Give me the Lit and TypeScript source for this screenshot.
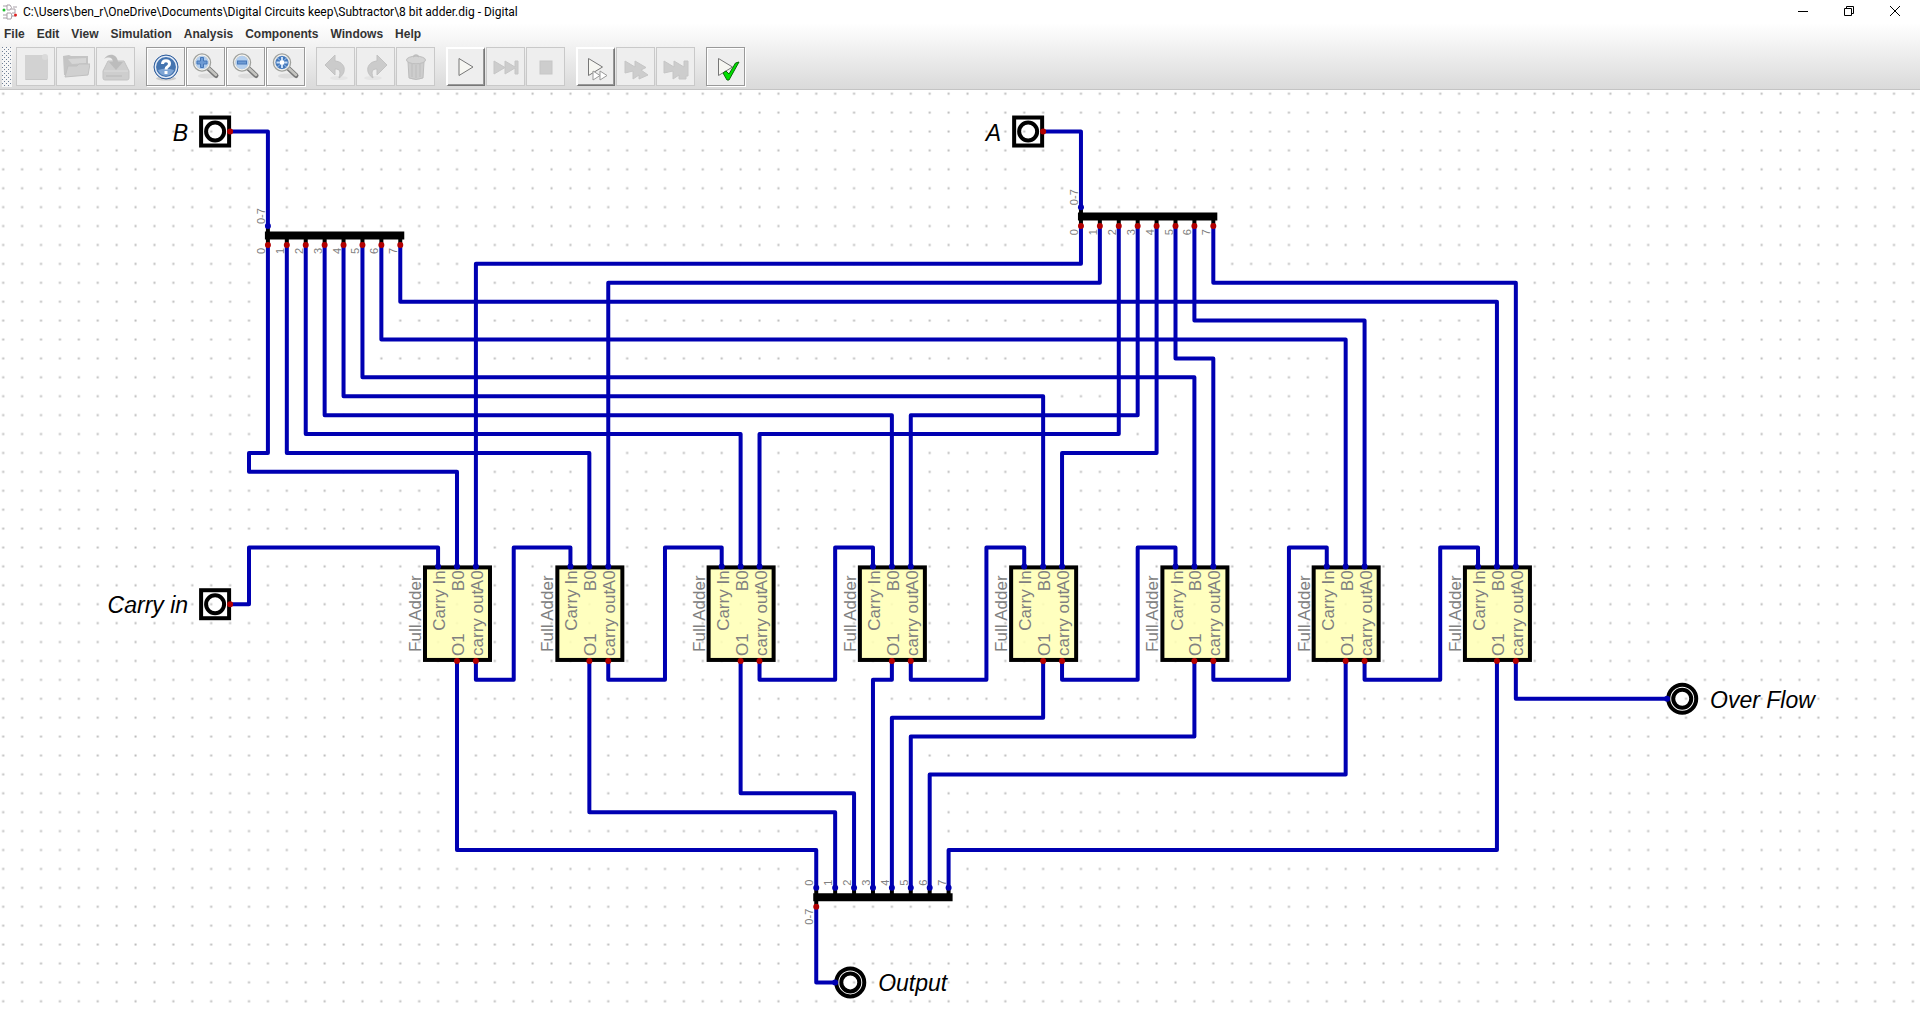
import { LitElement, html, css, svg } from "lit";
import { customElement } from "lit/decorators.js";

const PITCH = 18.908;
const gx = (c: number) => +(3.2 + PITCH * c).toFixed(2);
const gy = (r: number) => +(3.7 + PITCH * r).toFixed(2);

type Pt = [number, number];

/** Column of the middle (B0 / O1) pin of each full adder. */
const ADDERS = [24, 31, 39, 47, 55, 63, 71, 79];
/** Column in which each carry line climbs back to the next adder. */
const CARRY_COLS = [27, 35, 44, 52, 60, 68, 76];
const B_ROWS = [20, 19, 18, 17, 16, 15, 13, 11];
const A_ROWS = [9, 10, 18, 17, 19, 14, 12, 10];
const OUT_ROWS = [40, 38, 37, 31, 33, 34, 36, 40];

const WIRES: Pt[][] = [
  [[12, 2], [14, 2], [14, 7]],
  [[55, 2], [57, 2], [57, 6]],
  [[12, 27], [13, 27], [13, 24], [23, 24], [23, 25]],
  [[80, 30], [80, 32], [88, 32]],
  [[43, 43], [43, 47], [44, 47]],
  ...ADDERS.map((c, i): Pt[] =>
    i === 0
      ? [[14, 8], [14, 19], [13, 19], [13, 20], [c, 20], [c, 25]]
      : [[14 + i, 8], [14 + i, B_ROWS[i]], [c, B_ROWS[i]], [c, 25]]),
  ...ADDERS.map((c, i): Pt[] => [[57 + i, 7], [57 + i, A_ROWS[i]], [c + 1, A_ROWS[i]], [c + 1, 25]]),
  ...ADDERS.map((c, i): Pt[] => [[c, 30], [c, OUT_ROWS[i]], [43 + i, OUT_ROWS[i]], [43 + i, 42]]),
  ...CARRY_COLS.map((m, i): Pt[] => {
    const from = ADDERS[i] + 1;
    const to = ADDERS[i + 1] - 1;
    return [[from, 30], [from, 31], [m, 31], [m, 24], [to, 24], [to, 25]];
  }),
];

const pin = (c: number, r: number, kind: "in" | "out") =>
  svg`<circle class=${kind} cx=${gx(c)} cy=${gy(r)} r="3"></circle>`;

const upText = (x: number, y: number, cls: string, text: string) =>
  svg`<text class=${cls} transform="translate(${x} ${y}) rotate(-90)">${text}</text>`;

const inputPort = (c: number, r: number, label: string) => svg`
  <rect class="outline" x=${gx(c) - 29} y=${gy(r) - 14} width="28" height="28"></rect>
  <circle class="outline" cx=${gx(c) - 15} cy=${gy(r)} r="9"></circle>
  ${pin(c, r, "out")}
  <text class="label" text-anchor="end" x=${gx(c) - 42} y=${gy(r) + 9}>${label}</text>`;

const outputPort = (c: number, r: number, label: string) => svg`
  <circle class="outline" cx=${gx(c + 0.8)} cy=${gy(r)} r="14"></circle>
  <circle class="outline" cx=${gx(c + 0.8)} cy=${gy(r)} r="9"></circle>
  ${pin(c, r, "in")}
  <text class="label" x=${gx(c) + 43} y=${gy(r) + 9}>${label}</text>`;

const LANES = [0, 1, 2, 3, 4, 5, 6, 7];

const splitter = (c: number, r: number) => svg`
  <path class="stub" d="M${gx(c)} ${gy(r)}V${gy(r + 0.5)}"></path>
  ${LANES.map((i) => svg`<path class="stub" d="M${gx(c + i)} ${gy(r + 0.5)}V${gy(r + 1)}"></path>`)}
  <path class="bar" d="M${gx(c) - 3} ${gy(r + 0.5)}H${gx(c + 7) + 4}"></path>
  ${pin(c, r, "in")}
  ${LANES.map((i) => pin(c + i, r + 1, "out"))}
  ${upText(gx(c) - 3, gy(r) - 2, "tick", "0-7")}
  ${LANES.map((i) => svg`<text class="tick" text-anchor="end" transform="translate(${gx(c + i) - 3} ${gy(r + 1) + 3}) rotate(-90)">${i}</text>`)}`;

const merger = (c: number, r: number) => svg`
  ${LANES.map((i) => svg`<path class="stub" d="M${gx(c + i)} ${gy(r)}V${gy(r + 0.5)}"></path>`)}
  <path class="stub" d="M${gx(c)} ${gy(r + 0.5)}V${gy(r + 1)}"></path>
  <path class="bar" d="M${gx(c) - 3} ${gy(r + 0.5)}H${gx(c + 7) + 4}"></path>
  ${LANES.map((i) => pin(c + i, r, "in"))}
  ${pin(c, r + 1, "out")}
  ${LANES.map((i) => upText(gx(c + i) - 3, gy(r) - 2, "tick", String(i)))}
  <text class="tick" text-anchor="end" transform="translate(${gx(c) - 3} ${gy(r + 1) + 2}) rotate(-90)">0-7</text>`;

const adder = (c: number) => {
  const top = gy(25);
  const bottom = gy(30);
  const endText = (x: number, t: string) =>
    svg`<text class="pinname" text-anchor="end" transform="translate(${x} ${top + 4}) rotate(-90)">${t}</text>`;
  return svg`
    <rect class="chip" x=${gx(c) - 32} y=${top + 1} width="65" height=${bottom - top - 2}></rect>
    ${pin(c - 1, 25, "in")}${pin(c, 25, "in")}${pin(c + 1, 25, "in")}
    ${pin(c, 30, "out")}${pin(c + 1, 30, "out")}
    ${endText(gx(c - 1) + 7, "Carry In")}
    ${endText(gx(c) + 7, "B0")}
    ${endText(gx(c + 1) + 7, "A0")}
    ${upText(gx(c) + 7, bottom - 5, "pinname", "O1")}
    ${upText(gx(c + 1) + 7, bottom - 5, "pinname", "carry out")}
    ${upText(gx(c) - 36, bottom - 9, "pinname", "Full Adder")}`;
};

const magnifier = (mark: unknown) => svg`
  <ellipse cx="15" cy="23" rx="9" ry="2.500" fill="#ddd"></ellipse>
  <path d="M16.500 15.500L24 22.500" stroke="#777" stroke-width="5" stroke-linecap="round"></path>
  <path d="M17 15.500L24 22" stroke="#c4c4c0" stroke-width="2.500" stroke-linecap="round"></path>
  <circle cx="10" cy="9.500" r="8" fill="#b4cfee" stroke="#a0a29e" stroke-width="2.500"></circle>
  <circle cx="10" cy="9.500" r="7.300" fill="none" stroke="#f4f4f2" stroke-width="1.200"></circle>
  ${mark}`;

const ICONS: Record<string, unknown> = {
  new: svg`<path d="M3 2H23Q26 2 26 5V25Q26 27 24 27H3Z" fill="#d2d2d2"></path><path d="M4 26.500H25" stroke="#c6c6c6"></path><circle cx="23" cy="4" r="3" fill="#dadada"></circle>`,
  open: svg`<path d="M2 22L1 3L7 2L9 3H26V12L24 22Z" fill="#c4c4c4"></path><path d="M6 6L24 5V10L10 11Z" fill="#d6d6d6"></path><path d="M3 24L6 13H15L17 11H28L26 22Z" fill="#d0d0d0" stroke="#c0c0c0"></path>`,
  save: svg`<path d="M1 18L6 8H22L27 18V25Q27 27 25 27H3Q1 27 1 25Z" fill="#cecece" stroke="#c3c3c3"></path><path d="M2 18H26" stroke="#ddd"></path><path d="M4 23H20" stroke="#c3c3c3" stroke-width="2"></path><path d="M2 6C6 0 15 0 16 9H21L14 17L7 9H11C11 5 7 3 2 6Z" fill="#bcbcbc"></path>`,
  help: svg`<ellipse cx="14" cy="25.500" rx="10" ry="2" fill="#ccc"></ellipse><circle cx="14" cy="14" r="12" fill="#4474b0" stroke="#305e9d"></circle><circle cx="14" cy="14" r="10.600" fill="none" stroke="#e8effa" stroke-width="1.300"></circle><path d="M6 17Q14 14 22 17Q20 22.500 14 22.800Q8 22.500 6 17Z" fill="#7ea5d5"></path><path d="M10.500 11Q10.500 7.800 14 7.800Q17.500 7.800 17.500 10.800Q17.500 12.500 15.800 13.500Q14 14.500 14 16.500" fill="none" stroke="#fff" stroke-width="3"></path><rect x="12.500" y="18" width="3" height="3" fill="#fff"></rect>`,
  zoomIn: magnifier(svg`<path d="M8.500 4.500H11.500V8H15V11H11.500V14.500H8.500V11H5V8H8.500Z" fill="#6e9bd4" stroke="#4577b8"></path>`),
  zoomOut: magnifier(svg`<rect x="5.500" y="8" width="9" height="3" fill="#6e9bd4" stroke="#4577b8"></rect>`),
  zoomFit: magnifier(svg`<circle cx="10" cy="9.500" r="6.500" fill="#4378bb"></circle><path d="M10 4V15M4.500 9.500H15.500" stroke="#c9def7" stroke-width="2"></path><rect x="8" y="7.500" width="4" height="4" fill="#fff"></rect><path d="M5 4.500L8 7.500M15 4.500L12 7.500M5 14.500L8 11.500M15 14.500L12 11.500" stroke="#a9c6ea"></path>`),
  undo: svg`<ellipse cx="17" cy="25" rx="9" ry="2" fill="#e5e5e5"></ellipse><path d="M3 12L13 2V8C24 9 25 20 17 25C19 18 18 16 13 16V22Z" fill="#cbcbcb" stroke="#c2c2c2"></path>`,
  redo: svg`<ellipse cx="11" cy="25" rx="9" ry="2" fill="#e5e5e5"></ellipse><path d="M25 12L15 2V8C4 9 3 20 11 25C9 18 10 16 15 16V22Z" fill="#cbcbcb" stroke="#c2c2c2"></path>`,
  trash: svg`<path d="M6 9H22L21 25Q14 28 7 25Z" fill="#cdcdcd" stroke="#bdbdbd"></path><path d="M10 11V24M14 12V25M18 11V24" stroke="#bdbdbd"></path><ellipse cx="14" cy="7" rx="9.500" ry="3.800" fill="#d4d4d4" stroke="#bdbdbd"></ellipse><path d="M11 4Q14 0 17 4" fill="none" stroke="#bdbdbd" stroke-width="1.500"></path>`,
  play: svg`<path d="M7 5.500V22.500L21 14Z" fill="#f7f7f2" stroke="#777"></path>`,
  next: svg`<path d="M2 8L13 14.500V8L23 14V8H26V21H23V15L13 21V14.500L2 21Z" fill="#cdcdcd" stroke="#c6c6c6"></path>`,
  stop: svg`<rect x="8" y="8" width="12" height="13" fill="#cdcdcd" stroke="#c6c6c6"></rect>`,
  stepPlay: svg`<path d="M6.500 5.500V22.500L20.500 14Z" fill="#f7f7f2" stroke="#777"></path><path d="M11 18V27L18 22.500ZM18 18V27L25 22.500Z" fill="#fff" stroke="#999"></path>`,
  fast: svg`<path d="M3 8L13 14V8L24 14.500L19 17L26 22L17 26V22L11 26V18L3 20Z" fill="#cdcdcd" stroke="#c6c6c6"></path>`,
  fastEnd: svg`<path d="M2 8L12 14V8L22 14V8H26V23H24V26L17 26V22L11 26V18L2 20Z" fill="#cdcdcd" stroke="#c6c6c6"></path>`,
  check: svg`<path d="M6.500 5.500V22.500L20.500 14Z" fill="#f7f7f2" stroke="#777"></path><path d="M11 20L14 18L17 21L23.500 10L27 9L17 27H15Z" fill="#00e000" stroke="#086b08"></path>`,
};

interface Tool { icon: string; label: string; look: "off" | "flat" | "raised"; }

const GROUPS: Tool[][] = [
  [
    { icon: "new", label: "New", look: "off" },
    { icon: "open", label: "Open", look: "off" },
    { icon: "save", label: "Save", look: "off" },
  ],
  [
    { icon: "help", label: "Help", look: "flat" },
    { icon: "zoomIn", label: "Zoom in", look: "flat" },
    { icon: "zoomOut", label: "Zoom out", look: "flat" },
    { icon: "zoomFit", label: "Fit to window", look: "flat" },
  ],
  [
    { icon: "undo", label: "Undo", look: "off" },
    { icon: "redo", label: "Redo", look: "off" },
    { icon: "trash", label: "Delete", look: "off" },
  ],
  [
    { icon: "play", label: "Start simulation", look: "raised" },
    { icon: "next", label: "Next step", look: "off" },
    { icon: "stop", label: "Stop", look: "off" },
  ],
  [
    { icon: "stepPlay", label: "Start in gate mode", look: "raised" },
    { icon: "fast", label: "Gate step", look: "off" },
    { icon: "fastEnd", label: "Run to break", look: "off" },
  ],
  [{ icon: "check", label: "Run tests", look: "flat" }],
];

const MENUS = ["File", "Edit", "View", "Simulation", "Analysis", "Components", "Windows", "Help"];

@customElement("app-root")
export class AppRoot extends LitElement {
  static styles = css`
    :host {
      display: flex;
      flex-direction: column;
      height: 100vh;
      overflow: hidden;
      background: #fff;
      color: #000;
      font-family: "Liberation Sans", Arial, sans-serif;
    }
    button {
      font: inherit;
      color: inherit;
      margin: 0;
      padding: 0;
      background: none;
      border: 0;
    }
    .titlebar {
      display: flex;
      align-items: center;
      height: 23px;
      padding: 0 2px;
      font: 12px Roboto, "Noto Sans", sans-serif;
    }
    .appicon { width: 16px; height: 16px; margin-right: 5px; }
    .title { flex: 1; white-space: nowrap; overflow: hidden; font-weight: 400; }
    .winbtn { width: 46px; height: 22px; display: grid; place-items: center; }
    .winbtn svg { width: 10px; height: 10px; fill: none; stroke: #000; margin-bottom: 2px; }
    .chrome {
      flex: none;
      background: linear-gradient(#fff, #dadada);
      border-bottom: 1px solid #c4c4c4;
    }
    .menubar {
      display: flex;
      gap: 12px;
      height: 21px;
      padding-left: 4px;
      align-items: center;
      font-size: 12px;
      font-weight: 700;
      color: #333;
    }
    .toolbar {
      display: flex;
      align-items: center;
      height: 45px;
    }
    .grip {
      width: 10px;
      height: 40px;
      margin: 0 4px 0 2px;
      background:
        linear-gradient(#8593a6, #8593a6) 0 0 / 4px 4px,
        #fff;
      background:
        conic-gradient(#8593a6 25%, transparent 0) -1px 1px / 4px 4px,
        #f6f6f6;
      background:
        radial-gradient(circle at 1px 1px, #8593a6 0, #8593a6 50%, transparent 1px) 0 0 / 4px 4px,
        radial-gradient(circle at 1px 1px, #8593a6 0, #8593a6 50%, transparent 1px) 2px 2px / 4px 4px,
        #f6f6f6;
      background:
        conic-gradient(from 270deg at 1px 1px, #6f7f96 25%, transparent 0) 0 0 / 4px 4px,
        conic-gradient(from 270deg at 1px 1px, #6f7f96 25%, transparent 0) 2px 2px / 4px 4px,
        #f6f6f6;
    }
    .group { display: flex; gap: 1px; margin-right: 11px; }
    .tool {
      box-sizing: border-box;
      width: 39px;
      height: 39px;
      display: grid;
      place-items: center;
      background: #eee;
      border: 1px solid #999;
      box-shadow: inset 1px 1px #fff, 1px 1px #fff;
    }
    .off { border-color: #c9c9c9; box-shadow: none; }
    .raised {
      border-width: 2px 1px 1px 2px;
      border-color: #fff #777 #777 #fff;
      box-shadow: inset -1px -1px #999;
    }
    .tool svg { width: 28px; height: 28px; fill: none; }
    .canvas { flex: 1; min-height: 0; overflow: hidden; }
    .circuit { display: block; width: 100%; height: 100%; }
    .wire { fill: none; stroke: #0000b2; stroke-width: 4; stroke-linejoin: round; stroke-linecap: round; }
    .in { fill: #0000b2; }
    .out { fill: #b20000; }
    .stub { stroke: #000; stroke-width: 4; }
    .bar { stroke: #000; stroke-width: 8; }
    .outline { fill: none; stroke: #000; stroke-width: 4; }
    .chip { fill: #ffffb4; fill-opacity: 0.85; stroke: #000; stroke-width: 4; }
    .label { font-size: 23px; font-style: italic; fill: #000; }
    .pinname { font-size: 17px; fill: #808080; }
    .tick { font-size: 11px; fill: #808080; }
    .dot { fill: #bbb; }
  `;

  render() {
    return html`
      <header class="titlebar">
        <svg class="appicon" viewBox="0 0 16 16" fill="none" stroke="#a8a0a8">
          <path d="M5 1H8Q11 3.500 8 6H5ZM11 3H15M1 2H5M5 9H9Q11 11.500 9 15H5ZM1 11H5M9 5H13V9H10M1 14H5M9 12H14"></path>
          <circle cx="2" cy="6" r="1.500" fill="#20c030" stroke="none"></circle>
          <circle cx="13.500" cy="11" r="1.500" fill="#e02020" stroke="none"></circle>
        </svg>
        <span class="title">C:\\Users\\ben_r\\OneDrive\\Documents\\Digital Circuits keep\\Subtractor\\8 bit adder.dig - Digital</span>
        <button class="winbtn" aria-label="Minimize"><svg viewBox="0 0 10 10"><path d="M0 5.500H10"></path></svg></button>
        <button class="winbtn" aria-label="Restore"><svg viewBox="0 0 10 10"><path d="M.5 2.500H7.500V9.500H.5ZM2.500 2.500V.5H9.500V7.500H7.500"></path></svg></button>
        <button class="winbtn" aria-label="Close"><svg viewBox="0 0 10 10"><path d="M0 0L10 10M10 0L0 10"></path></svg></button>
      </header>
      <div class="chrome">
        <nav class="menubar">${MENUS.map((m) => html`<button>${m}</button>`)}</nav>
        <div class="toolbar" role="toolbar">
          <span class="grip"></span>
          ${GROUPS.map((g) => html`<div class="group">
            ${g.map((t) => html`<button class="tool ${t.look}" aria-label=${t.label} ?disabled=${t.look === "off"}>
              <svg viewBox="0 0 28 28">${ICONS[t.icon]}</svg>
            </button>`)}
          </div>`)}
        </div>
      </div>
      <main class="canvas">
        <svg class="circuit">
          <defs>
            <pattern id="grid" patternUnits="userSpaceOnUse" x="-6.300" y="-5.800" width=${PITCH} height=${PITCH}>
              <rect class="dot" x="8.500" y="8.500" width="2" height="2"></rect>
            </pattern>
          </defs>
          <rect width="100%" height="100%" fill="url(#grid)"></rect>
          ${WIRES.map((w) => svg`<polyline class="wire" points=${w.map(([c, r]) => `${gx(c)},${gy(r)}`).join(" ")}></polyline>`)}
          ${splitter(14, 7)}
          ${splitter(57, 6)}
          ${merger(43, 42)}
          ${ADDERS.map(adder)}
          ${inputPort(12, 2, "B")}
          ${inputPort(55, 2, "A")}
          ${inputPort(12, 27, "Carry in")}
          ${outputPort(88, 32, "Over Flow")}
          ${outputPort(44, 47, "Output")}
        </svg>
      </main>
    `;
  }
}
